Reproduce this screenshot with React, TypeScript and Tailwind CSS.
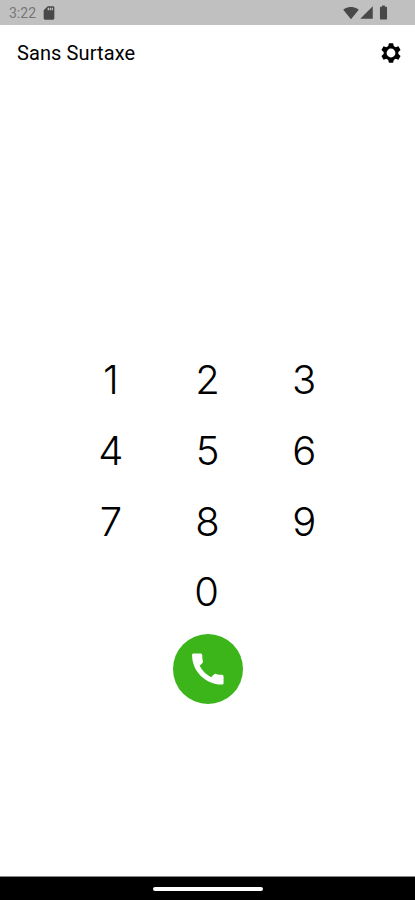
import {
  MdBatteryFull,
  MdSdCard,
  MdSignalCellular4Bar,
  MdSignalWifi4Bar,
} from 'react-icons/md'

const keys = ['1', '2', '3', '4', '5', '6', '7', '8', '9']

function StatusBar() {
  return (
    <div className="flex h-[25px] items-center justify-between bg-[#c0c0c0] pl-[9px] pr-[23px] text-[#484848]">
      <div className="flex items-center gap-[5px]">
        <span className="font-['Roboto',sans-serif] text-[14px] leading-none text-[#777]">3:22</span>
        <MdSdCard size={16} />
      </div>
      <div className="flex items-center">
        <MdSignalWifi4Bar size={16} />
        <MdSignalCellular4Bar size={15} />
        <MdBatteryFull size={17} className="ml-px" />
      </div>
    </div>
  )
}

function GearIcon() {
  const teeth = [0, 60, 120, 180, 240, 300]

  return (
    <svg viewBox="-10 -10 20 20" className="h-5 w-5" aria-hidden="true">
      <circle r="5.9" fill="none" stroke="black" strokeWidth="3" />
      {teeth.map((angle) => (
        <path key={angle} d="M-2.9-6.2 -2.1-9.8H2.1L2.9-6.2Z" transform={`rotate(${angle})`} />
      ))}
    </svg>
  )
}

function PhoneIcon() {
  return (
    <svg viewBox="0 0 24 24" className="h-[42px] w-[42px]" fill="currentColor" aria-hidden="true">
      <path d="M20 15.3c-1.25 0-2.35-.1-3.47-.47-.35-.11-.74-.03-1.02.24l-1.7 1.7c-2.83-1.44-5.15-3.75-6.59-6.59l1.6-1.61c.28-.26.36-.65.25-1C8.8 6.45 8.7 5.25 8.7 4c0-.55-.45-.9-1-.9H3.7c-.45 0-.8.35-.8.9C2.9 13.4 10.6 20.9 20 20.9c.55 0 .9-.35.9-.9v-3.7c0-.55-.35-1-.9-1z" />
    </svg>
  )
}

function Keypad() {
  const digit =
    "flex h-[70.7px] items-center justify-center font-['Inter',sans-serif] text-[40px] font-light leading-none text-black"

  return (
    <div className="mx-auto grid w-[290px] grid-cols-3">
      {keys.map((key) => (
        <button key={key} className={digit}>
          {key}
        </button>
      ))}
      <button className={`${digit} col-start-2 pr-0.5`}>0</button>
    </div>
  )
}

export default function App() {
  return (
    <div className="flex h-[900px] w-[415px] flex-col bg-white">
      <StatusBar />
      <header className="flex h-14 items-center justify-between pl-[17px] pr-[14px]">
        <h1 className="font-['Roboto',sans-serif] text-[20px] font-normal tracking-[0.1px] text-black">
          Sans Surtaxe
        </h1>
        <button aria-label="Settings">
          <GearIcon />
        </button>
      </header>
      <main className="flex flex-1 flex-col items-center pt-[264px]">
        <Keypad />
        <button
          aria-label="Call"
          className="mt-1.5 flex h-[70px] w-[70px] items-center justify-center rounded-full bg-[#3cb51b] text-white"
        >
          <PhoneIcon />
        </button>
      </main>
      <footer className="flex h-6 items-center justify-center border-t border-[#888] bg-black">
        <div className="h-1 w-[110px] rounded-full bg-white" />
      </footer>
    </div>
  )
}
